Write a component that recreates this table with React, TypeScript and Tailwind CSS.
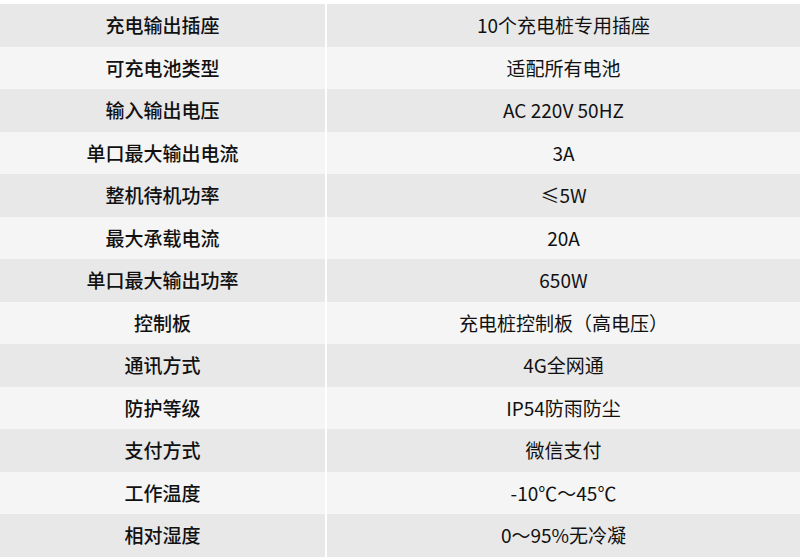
const rows: [string, string][] = [
  ["充电输出插座", "10个充电桩专用插座"],
  ["可充电池类型", "适配所有电池"],
  ["输入输出电压", "AC 220V 50HZ"],
  ["单口最大输出电流", "3A"],
  ["整机待机功率", "≤5W"],
  ["最大承载电流", "20A"],
  ["单口最大输出功率", "650W"],
  ["控制板", "充电桩控制板（高电压）"],
  ["通讯方式", "4G全网通"],
  ["防护等级", "IP54防雨防尘"],
  ["支付方式", "微信支付"],
  ["工作温度", "-10℃～45℃"],
  ["相对湿度", "0～95%无冷凝"],
];

export default function App() {
  return (
    <div
      className="w-[800px] h-[557px] bg-white pt-1 flex flex-col text-[19px] text-[#111]"
      style={{ fontFamily: '"Noto Sans CJK SC", "Noto Sans", sans-serif' }}
    >
      {rows.map(([label, value], i) => (
        <div
          key={label}
          className={`flex-1 flex ${i % 2 === 0 ? "bg-[#e8e8e8]" : "bg-[#f5f5f5]"}`}
        >
          <div className="w-[325px] flex items-center justify-center font-medium">{label}</div>
          <div className="w-[2px] bg-white" />
          <div className="flex-1 flex items-center justify-center">{value}</div>
        </div>
      ))}
    </div>
  );
}
